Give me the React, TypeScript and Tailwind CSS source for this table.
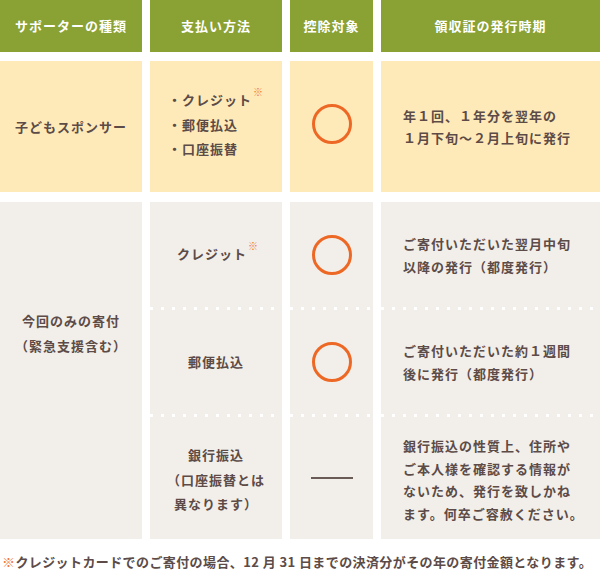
const FONT = "font-['Noto_Sans_CJK_JP',sans-serif]";
const CELL_GRAY = "bg-[#f2efea]";

const Note = () => (
  <span className="relative -top-[9px] ml-[1px] text-[10px] font-normal text-[#f07a3a]">※</span>
);

const Circle = ({ lift = "" }: { lift?: string }) => (
  <div className={`h-[40px] w-[40px] rounded-full border-[3px] border-[#ee6825] ${lift}`} />
);

// dotted white separator across the three right columns
const Dots = () => (
  <div className="flex gap-2">
    {["w-[132px]", "w-[83px]", "w-[219px]"].map((w) => (
      <div
        key={w}
        className={`${w} h-[3px] ${CELL_GRAY} bg-[linear-gradient(to_right,#ffffff_3px,transparent_3px)] bg-[length:11px_3px]`}
      />
    ))}
  </div>
);

interface SubRowProps {
  h: string;
  method: React.ReactNode;
  mark: React.ReactNode;
  timing: React.ReactNode;
}

const SubRow = ({ h, method, mark, timing }: SubRowProps) => (
  <div className={`flex gap-2 ${h}`}>
    <div className={`w-[132px] ${CELL_GRAY} flex items-center justify-center text-center leading-[24px]`}>{method}</div>
    <div className={`w-[83px] ${CELL_GRAY} flex items-center justify-center`}>{mark}</div>
    <div className={`w-[219px] ${CELL_GRAY} flex items-center pl-[22px] leading-[23px]`}>{timing}</div>
  </div>
);

export default function App() {
  const head = ["サポーターの種類", "支払い方法", "控除対象", "領収証の発行時期"];
  const widths = ["w-[142px]", "w-[132px]", "w-[83px]", "w-[219px]"];

  return (
    <div className={`${FONT} w-[600px] h-[580px] bg-white text-[13px] font-bold tracking-[1px] text-[#5c4b47]`}>
      {/* Header */}
      <div className="flex gap-2 h-[52px]">
        {head.map((t, i) => (
          <div key={t} className={`${widths[i]} bg-[#8aa134] text-white flex items-center justify-center`}>
            {t}
          </div>
        ))}
      </div>

      {/* Child sponsor */}
      <div className="flex gap-2 h-[131px] mt-[9px]">
        <div className="w-[142px] bg-[#feeab9] flex items-center justify-center">子どもスポンサー</div>
        <div className="w-[132px] bg-[#feeab9] flex items-center justify-center">
          <ul className="leading-[24px] -mt-[4px]">
            <li>・クレジット<Note /></li>
            <li>・郵便払込</li>
            <li>・口座振替</li>
          </ul>
        </div>
        <div className="w-[83px] bg-[#feeab9] flex items-center justify-center">
          <Circle lift="-mt-[6px]" />
        </div>
        <div className="w-[219px] bg-[#feeab9] flex items-center pl-[22px] leading-[22px]">
          <p>
            年１回、１年分を翌年の
            <br />
            １月下旬～２月上旬に発行
          </p>
        </div>
      </div>

      {/* One-time donation */}
      <div className="flex gap-2 h-[337px] mt-[10px]">
        <div className={`w-[142px] ${CELL_GRAY} pt-[106px] text-center leading-[25px]`}>
          今回のみの寄付
          <br />
          （緊急支援含む）
        </div>
        <div className="flex flex-col">
          <SubRow
            h="h-[105px]"
            method={<span className="pl-[4px]">クレジット<Note /></span>}
            mark={<Circle />}
            timing={<p>ご寄付いただいた翌月中旬<br />以降の発行（都度発行）</p>}
          />
          <Dots />
          <SubRow
            h="h-[104px]"
            method="郵便払込"
            mark={<Circle />}
            timing={<p>ご寄付いただいた約１週間<br />後に発行（都度発行）</p>}
          />
          <Dots />
          <SubRow
            h="h-[122px]"
            method={<p className="leading-[24.5px] pt-[4px]">銀行振込<br />（口座振替とは<br />異なります）</p>}
            mark={<div className="h-[2px] w-[42px] bg-[#6b5b57]" />}
            timing={
              <p className="leading-[22.5px] pt-[4px]">
                銀行振込の性質上、住所や<br />ご本人様を確認する情報が<br />ないため、発行を致しかね<br />ます。何卒ご容赦ください。
              </p>
            }
          />
        </div>
      </div>

      {/* Footnote */}
      <p className="mt-[13px] pl-[2px] leading-[20px] whitespace-nowrap tracking-[0.4px]">
        <span className="text-[#f07a3a]">※</span>クレジットカードでのご寄付の場合、12 月 31 日までの決済分がその年の寄付金額となります。
      </p>
    </div>
  );
}
